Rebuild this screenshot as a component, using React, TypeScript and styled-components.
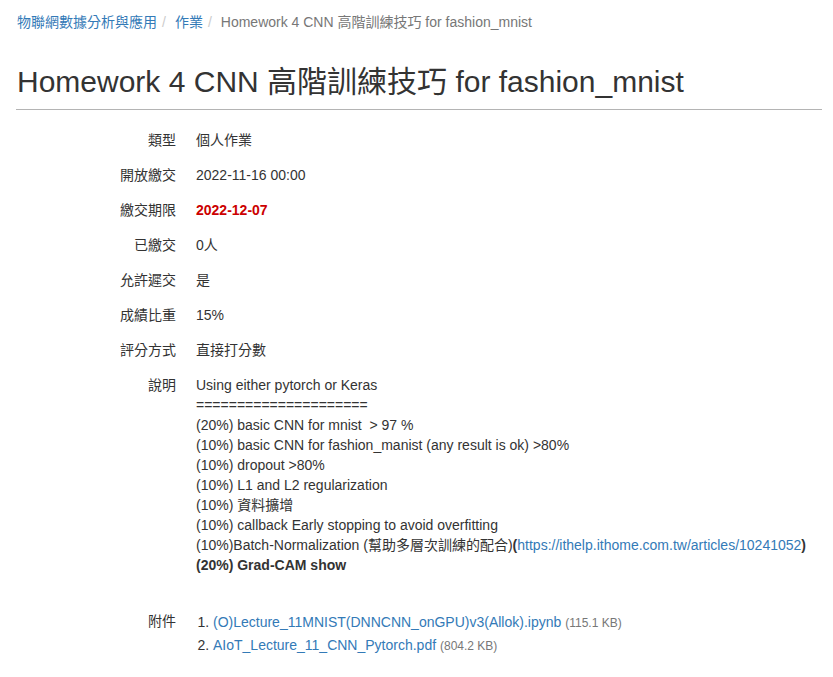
import React from 'react'
import styled, { createGlobalStyle } from 'styled-components'

const GlobalStyle = createGlobalStyle`
	html, body {
		margin: 0;
		padding: 0;
		background: #fff;
	}
	body {
		font-family: 'Liberation Sans', Arial, 'Noto Sans CJK TC', sans-serif;
		font-size: 14px;
		line-height: 20px;
		color: #333;
	}
	a {
		color: #337ab7;
		text-decoration: none;
	}
`

interface Field {
	label: string
	value: React.ReactNode
}

interface Attachment {
	name: string
	size: string
}

const Page = styled.div`
	padding: 12px 11px 0 16px;
`

const Breadcrumb = styled.ol`
	display: flex;
	list-style: none;
	margin: 0;
	padding: 0 0 0 1px;
	color: #777;
`

const Crumb = styled.li`
	& + &::before {
		content: '/';
		color: #ccc;
		padding: 0 9px 0 5px;
	}
`

const PageHeader = styled.div`
	margin-top: 33px;
	padding-bottom: 10px;
	border-bottom: 1px solid #b4b4b4;
`

const Title = styled.h1`
	margin: 0;
	padding-left: 1px;
	font-size: 30px;
	font-weight: 400;
	line-height: 34px;
	color: #333;
`

const Details = styled.dl`
	margin: 20px 0 0;
`

const Row = styled.div`
	display: flex;
	margin-bottom: 15px;

	&:last-child {
		margin-bottom: 0;
	}
`

const Label = styled.dt`
	width: 160px;
	flex: none;
	text-align: right;
	font-weight: 400;
`

const Value = styled.dd`
	margin: 0 0 0 20px;
	flex: 1;
`

const Deadline = styled.span`
	color: #cc0000;
	font-weight: 700;
`

const Description = styled.div`
	white-space: pre-wrap;
	padding-bottom: 21px;
`

const Files = styled.ol`
	margin: 0;
	padding-left: 17px;
	li {
		line-height: 22px;
	}
`

const FileSize = styled.span`
	color: #777;
	font-size: 12px;
`

const attachments: Attachment[] = [
	{ name: '(O)Lecture_11MNIST(DNNCNN_onGPU)v3(Allok).ipynb', size: '115.1 KB' },
	{ name: 'AIoT_Lecture_11_CNN_Pytorch.pdf', size: '804.2 KB' },
]

const description = (
	<Description>
		{`Using either pytorch or Keras
=====================
(20%) basic CNN for mnist  > 97 %
(10%) basic CNN for fashion_manist (any result is ok) >80%
(10%) dropout >80%
(10%) L1 and L2 regularization
(10%) 資料擴增
(10%) callback Early stopping to avoid overfitting
(10%)Batch-Normalization (幫助多層次訓練的配合)`}
		<b>(</b>
		<a href="#">https://ithelp.ithome.com.tw/articles/10241052</a>
		<b>)</b>
		{'\n'}
		<b>(20%) Grad-CAM show</b>
	</Description>
)

const fields: Field[] = [
	{ label: '類型', value: '個人作業' },
	{ label: '開放繳交', value: '2022-11-16 00:00' },
	{ label: '繳交期限', value: <Deadline>2022-12-07</Deadline> },
	{ label: '已繳交', value: '0人' },
	{ label: '允許遲交', value: '是' },
	{ label: '成績比重', value: '15%' },
	{ label: '評分方式', value: '直接打分數' },
	{ label: '說明', value: description },
	{
		label: '附件',
		value: (
			<Files>
				{attachments.map(file => (
					<li key={file.name}>
						<a href="#">{file.name}</a> <FileSize>({file.size})</FileSize>
					</li>
				))}
			</Files>
		),
	},
]

const App: React.FC = () => {
	return (
		<Page>
			<GlobalStyle />
			<Breadcrumb>
				<Crumb>
					<a href="#">物聯網數據分析與應用</a>
				</Crumb>
				<Crumb>
					<a href="#">作業</a>
				</Crumb>
				<Crumb>Homework 4 CNN 高階訓練技巧 for fashion_mnist</Crumb>
			</Breadcrumb>

			<PageHeader>
				<Title>Homework 4 CNN 高階訓練技巧 for fashion_mnist</Title>
			</PageHeader>

			<Details>
				{fields.map(field => (
					<Row key={field.label}>
						<Label>{field.label}</Label>
						<Value>{field.value}</Value>
					</Row>
				))}
			</Details>
		</Page>
	)
}

export default App
